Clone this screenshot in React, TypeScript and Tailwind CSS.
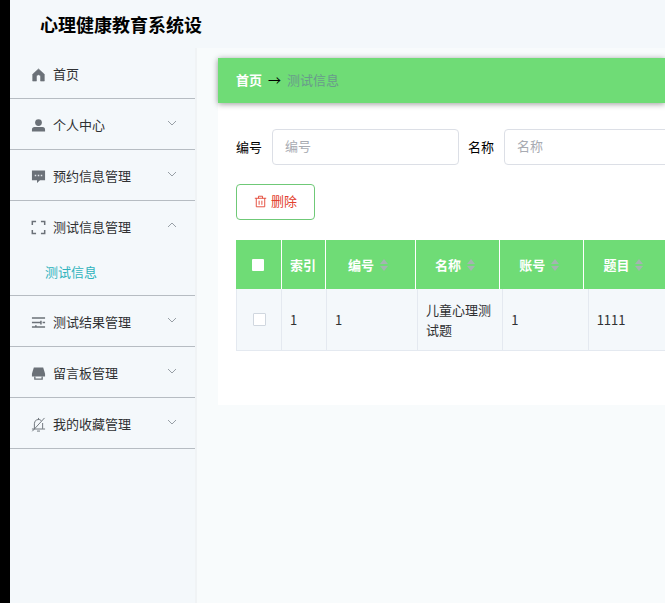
import type { ReactNode } from 'react';

interface MenuItem {
  id: string;
  name: string;
  icon: ReactNode;
  children?: string[];
  open?: boolean;
}

const menu: MenuItem[] = [
  {
    id: 'home',
    name: '首页',
    icon: <path d="M8 2 1.8 7.6v7.4h4V10.4a2.2 2.2 0 0 1 4.4 0v4.6h4V7.6z" fill="currentColor" stroke="currentColor" strokeWidth="0.6" />,
  },
  {
    id: 'user',
    name: '个人中心',
    icon: (
      <g fill="currentColor">
        <circle cx="8" cy="4.8" r="3.6" />
        <path d="M1 14.4V12.4a2.8 2.8 0 0 1 2.8-2.8h8.4a2.8 2.8 0 0 1 2.8 2.8v2z" />
      </g>
    ),
    children: [],
  },
  {
    id: 'booking',
    name: '预约信息管理',
    icon: (
      <g>
        <path d="M1 1.6h14v10.4H9.6L6.4 15v-3H1z" fill="currentColor" />
        <path d="M4 6h1.6v1.6H4zM7.2 6h1.6v1.6H7.2zM10.4 6H12v1.6h-1.6z" fill="#dfe4e8" />
      </g>
    ),
    children: [],
  },
  {
    id: 'test',
    name: '测试信息管理',
    icon: <path d="M5.4 1.6H1.4v3.8M10.6 1.6h4v3.8M5.4 14.4H1.4v-3.8M10.6 14.4h4v-3.8" fill="none" stroke="currentColor" strokeWidth="1.6" />,
    children: ['测试信息'],
    open: true,
  },
  {
    id: 'result',
    name: '测试结果管理',
    icon: <path d="M1 3.2h14M1 8h9M12.4 8H15M1 12.8h14M10.6 6v4M5.2 11v1.8" fill="none" stroke="currentColor" strokeWidth="1.6" />,
    children: [],
  },
  {
    id: 'board',
    name: '留言板管理',
    icon: (
      <g fill="currentColor">
        <path d="M3 1.6h10l2 6.6v3H1v-3z" />
        <path d="M3.4 11.2h1.4v2h6.4v-2h1.4v3.4H3.4z" />
      </g>
    ),
    children: [],
  },
  {
    id: 'favorite',
    name: '我的收藏管理',
    icon: <path d="M3.6 12.6V7.2a4.4 4.4 0 0 1 7.4-3.4M12.4 6.4v6.2M1 12.8h14M6.4 15h3.2M14.4 1 1.4 15.2M8 1v1.6" fill="none" stroke="currentColor" strokeWidth="1" />,
    children: [],
  },
];

const columns = ['编号', '名称', '账号', '题目'];
const rows = [{ id: 1, cells: ['1', '儿童心理测试题', '1', '1111'] }];

function Chevron({ up = false }: { up?: boolean }) {
  return (
    <svg viewBox="0 0 10 10" className="mb-1 size-2.5 text-[#8d949c]" fill="none" stroke="currentColor" strokeWidth="0.9">
      <path d={up ? 'M1 7l4-4 4 4' : 'M1 3l4 4 4-4'} />
    </svg>
  );
}

function SortCaret() {
  return (
    <svg viewBox="0 0 8 14" className="h-3.5 w-2 text-[#a3b5b0]" fill="currentColor">
      <path d="M4 1l4 5H0zM4 13l4-5H0z" />
    </svg>
  );
}

function Sidebar() {
  return (
    <nav className="w-[185px] shrink-0 text-[#303133]">
      {menu.map((item) => (
        <div key={item.id} className="border-b border-[#b6bcc2]">
          <button type="button" className="flex h-[50px] w-full items-center gap-[7px] pt-0.5 pr-[18px] pl-[21px] text-left">
            <svg viewBox="0 0 16 16" className="size-[15px] shrink-0 text-[#6b7178]">
              {item.icon}
            </svg>
            <span className="flex-1">{item.name}</span>
            {item.children && <Chevron up={item.open} />}
          </button>
          {item.open &&
            item.children?.map((child) => (
              <a key={child} href="#" className="flex h-11 items-center pb-0.5 pl-[35px] text-[#2fb3bd]">
                {child}
              </a>
            ))}
        </div>
      ))}
    </nav>
  );
}

function Field({ id, label }: { id: string; label: string }) {
  return (
    <div className="flex shrink-0 items-center gap-2.5">
      <label htmlFor={id} className="text-black">
        {label}
      </label>
      <input
        id={id}
        type="text"
        placeholder={label}
        className="h-9 w-[187px] rounded border border-[#dcdfe6] bg-white px-3 pb-1 placeholder:text-[#a8abb2]"
      />
    </div>
  );
}

function DataTable() {
  return (
    <div className="mt-5 text-[#303133]">
      <table className="w-full min-w-[432px] table-fixed border-collapse">
        <thead>
          <tr className="h-[49px] bg-[#6fdc76] text-white">
            <th className="w-[45px] border-r border-white">
              <input
                type="checkbox"
                aria-label="全选"
                className="mx-auto block size-3 appearance-none rounded-[1px] bg-white"
              />
            </th>
            <th className="w-11 border-r border-white">索引</th>
            {columns.map((name, i) => (
              <th key={name} className={i === 0 ? 'w-[90px] border-r border-white pr-1' : 'border-r border-white pr-1'}>
                <span className="flex items-center justify-center gap-1.5">
                  {name}
                  <SortCaret />
                </span>
              </th>
            ))}
          </tr>
        </thead>
      </table>
      <table className="w-full min-w-[438px] table-fixed border-separate border-spacing-0 border-l border-[#e4e9f0]">
        <tbody>
          {rows.map((row) => (
            <tr key={row.id} className="h-[62px] bg-[#f4f8fb]">
              <td className="w-[45px] border-r border-b border-[#e4e9f0]">
                <input
                  type="checkbox"
                  aria-label="选择"
                  className="mx-auto block size-[13px] appearance-none rounded-[1px] border border-[#d0d7df] bg-white"
                />
              </td>
              <td className="w-[45px] border-r border-b border-[#e4e9f0] px-2">{row.id}</td>
              {row.cells.map((cell, i) => (
                <td
                  key={i}
                  className={
                    i === 0
                      ? 'w-[91px] border-r border-b border-[#e4e9f0] px-2'
                      : 'border-r border-b border-[#e4e9f0] px-2 leading-5'
                  }
                >
                  {cell}
                </td>
              ))}
            </tr>
          ))}
        </tbody>
      </table>
    </div>
  );
}

export default function App() {
  return (
    <div className="flex min-h-screen flex-col overflow-hidden border-l-10 border-black bg-[#f4f8fb] font-['Noto_Sans_CJK_SC',sans-serif] text-[13px]">
      <header className="flex h-12 items-center pl-[30px]">
        <h1 className="text-[18px] font-bold text-black">心理健康教育系统设</h1>
      </header>
      <div className="flex flex-1">
        <Sidebar />
        <main className="min-w-0 flex-1 border-l-2 border-[#f0f3f5] bg-[#f8fbfc] pt-2.5 pl-[21px]">
          <div className="relative flex h-[45px] items-center gap-1.5 bg-[#6fdc76] pb-0.5 pl-[18px] shadow-[0_1px_6px_rgba(0,0,0,0.4)]">
            <a href="#" className="font-bold text-white">
              首页
            </a>
            <span className="text-black">→</span>
            <span className="text-[#6a9a8c]">测试信息</span>
          </div>
          <section className="overflow-hidden bg-white pt-[26px] pb-[54px] pl-[18px]">
            <form className="flex gap-[9px]">
              <Field id="number" label="编号" />
              <Field id="name" label="名称" />
            </form>
            <button
              type="button"
              className="mt-[19px] flex h-9 w-[79px] items-center justify-center gap-1 rounded border border-[#6fc977] bg-white pb-0.5 text-[#e2402e]"
            >
              <svg viewBox="0 0 16 16" className="size-[13px]" fill="none" stroke="currentColor" strokeWidth="1.1">
                <path d="M1 4h14M5.5 4V1.5h5V4M2.8 4v10.5h10.4V4M6.3 7v5M9.7 7v5" />
              </svg>
              删除
            </button>
            <DataTable />
          </section>
        </main>
      </div>
    </div>
  );
}
